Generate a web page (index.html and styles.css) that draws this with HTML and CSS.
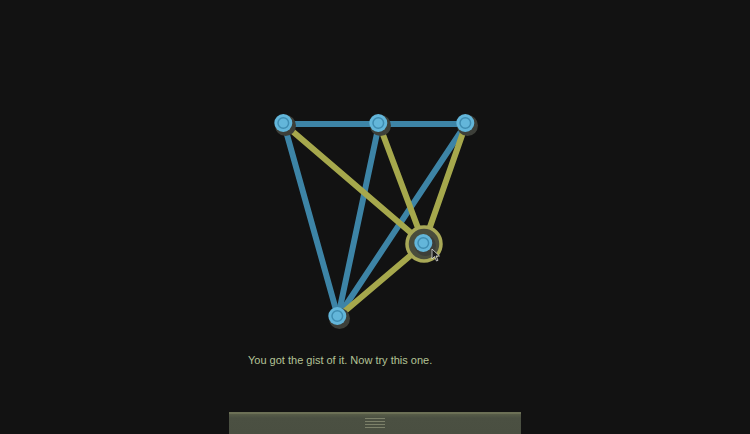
FILE: index.html
```html
<!DOCTYPE html>
<html>
<head>
<meta charset="utf-8">
<link rel="stylesheet" href="styles.css">
</head>
<body>
<div class="page">
  <svg class="board" width="750" height="350" viewBox="0 0 750 350">
    <g class="edge blue">
      <line x1="284" y1="124" x2="379" y2="124"/>
      <line x1="379" y1="124" x2="466" y2="124"/>
      <line x1="284" y1="124" x2="338" y2="317"/>
      <line x1="379" y1="124" x2="338" y2="317"/>
      <line x1="466" y1="124" x2="338" y2="317"/>
    </g>
    <g class="edge yellow">
      <line x1="284" y1="124" x2="424" y2="244"/>
      <line x1="379" y1="124" x2="424" y2="244"/>
      <line x1="466" y1="124" x2="424" y2="244"/>
      <line x1="424" y1="244" x2="338" y2="317"/>
    </g>
    <circle class="sel-fill" cx="424" cy="244" r="17"/>
    <circle class="sel-ring" cx="424" cy="244" r="17"/>
    <g class="node" transform="translate(284 124)">
      <circle class="shadow" cx="1.5" cy="1.5" r="10.5"/>
      <circle class="body" cx="-0.7" cy="-1" r="9"/>
      <circle class="ring" cx="-0.7" cy="-1" r="5.3"/>
    </g>
    <g class="node" transform="translate(379 124)">
      <circle class="shadow" cx="1.5" cy="1.5" r="10.5"/>
      <circle class="body" cx="-0.7" cy="-1" r="9"/>
      <circle class="ring" cx="-0.7" cy="-1" r="5.3"/>
    </g>
    <g class="node" transform="translate(466 124)">
      <circle class="shadow" cx="1.5" cy="1.5" r="10.5"/>
      <circle class="body" cx="-0.7" cy="-1" r="9"/>
      <circle class="ring" cx="-0.7" cy="-1" r="5.3"/>
    </g>
    <g class="node" transform="translate(424 244)">
      <circle class="shadow" cx="1.5" cy="1.5" r="10.5"/>
      <circle class="body" cx="-0.7" cy="-1" r="9"/>
      <circle class="ring" cx="-0.7" cy="-1" r="5.3"/>
    </g>
    <g class="node" transform="translate(338 317)">
      <circle class="shadow" cx="1.5" cy="1.5" r="10.5"/>
      <circle class="body" cx="-0.7" cy="-1" r="9"/>
      <circle class="ring" cx="-0.7" cy="-1" r="5.3"/>
    </g>
    <path class="cursor" d="M432 249 L432 259 L434.5 256.5 L436.5 261 L438 260.3 L436 256 L439.5 256 Z"/>
  </svg>
  <p class="message">You got the gist of it. Now try this one.</p>
  <div class="bar">
    <div class="grip">
      <span></span><span></span><span></span><span></span>
    </div>
  </div>
</div>
</body>
</html>
```
FILE: styles.css
```css
html, body {
  margin: 0;
  padding: 0;
  background: #121212;
}
.page {
  width: 750px;
  height: 434px;
  overflow: hidden;
  display: flex;
  flex-direction: column;
}
.board {
  display: block;
  flex: none;
}
.edge line {
  stroke-width: 6;
  stroke-linecap: round;
}
.edge.blue line {
  stroke: #3d84a6;
}
.edge.yellow line {
  stroke: #a6a84c;
}
.sel-fill {
  fill: #4a4d3c;
}
.sel-ring {
  fill: none;
  stroke: #a9a957;
  stroke-width: 3.5;
}
.node .shadow {
  fill: #3d3f39;
}
.node .body {
  fill: #63b6da;
}
.node .ring {
  fill: none;
  stroke: #3f8db2;
  stroke-width: 1.5;
}
.cursor {
  fill: #1a1a1a;
  stroke: #d8d8d8;
  stroke-width: 0.8;
}
.message {
  margin: 3px 0 0 248px;
  font-family: "Liberation Sans", Arial, sans-serif;
  font-size: 11px;
  line-height: 14px;
  color: #b4c396;
}
.bar {
  margin: 45px 0 0 229px;
  width: 292px;
  height: 22px;
  box-sizing: border-box;
  background: linear-gradient(#6c7056 0, #6c7056 2px, #585d48 2px, #4b5042 6px, #4a4f41 100%);
  display: flex;
  justify-content: center;
  padding-top: 6px;
}
.grip {
  display: flex;
  flex-direction: column;
  gap: 2px;
  width: 20px;
}
.grip span {
  display: block;
  height: 1px;
  background: #7d816a;
}
```
